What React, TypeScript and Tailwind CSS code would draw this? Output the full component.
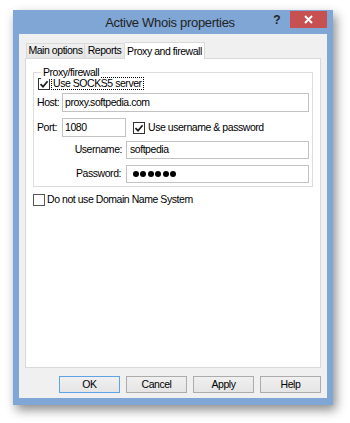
import React from "react";

const Check = ({ checked }: { checked: boolean }) => (
  <span className="w-[12px] h-[12px] border border-[#333] bg-white flex items-center justify-center shrink-0">
    {checked && (
      <svg width="10" height="10" viewBox="0 0 10 10">
        <path d="M1.5 5.2 L4 7.7 L8.6 2.2" fill="none" stroke="#1a1a1a" strokeWidth="1.7" />
      </svg>
    )}
  </span>
);

const Btn = ({ label, def }: { label: string; def?: boolean }) => (
  <div
    className={
      "w-[61px] h-[17px] flex items-center justify-center bg-gradient-to-b from-[#f0f0f0] to-[#e5e5e5] border leading-none text-black " +
      (def ? "border-[#5ea3e6]" : "border-[#acacac]")
    }
  >
    {label}
  </div>
);

export default function App() {
  return (
    <div
      className="w-[350px] h-[423px] bg-white pl-[13px] pt-[10px] text-[10.5px] tracking-[-0.45px] text-black whitespace-nowrap"
      style={{ fontFamily: "'Liberation Sans', Arial, sans-serif" }}
    >
      <div className="w-[320px] h-[395px] bg-[#7fa6d5] flex flex-col shadow-[3px_5px_10px_rgba(0,0,0,0.45)]">
        {/* title bar */}
        <div className="h-[24px] grid grid-cols-[1fr_auto_1fr] items-center pr-[6px]">
          <div />
          <div className="text-[13px] text-[#222] tracking-[-0.3px] pt-[1px]">Active Whois properties</div>
          <div className="flex justify-end self-start h-full">
            <div className="w-[26px] h-[17px] mt-[1px] flex items-center justify-center text-[12px] font-bold text-[#222] tracking-normal">
              ?
            </div>
            <div className="w-[37px] h-[17px] mt-[1px] bg-[#c75050] flex items-center justify-center">
              <svg width="9" height="9" viewBox="0 0 9 9">
                <path d="M1 1 L8 8 M8 1 L1 8" stroke="white" strokeWidth="2" />
              </svg>
            </div>
          </div>
        </div>

        {/* client area */}
        <div className="mx-[6px] h-[364px] bg-[#f0f0f0] flex flex-col px-[6px]">
          {/* tabs */}
          <div className="mt-[8px] h-[16px] flex items-end pl-[1px]">
            <div className="w-[59px] h-[15px] border border-b-0 border-[#d9d9d9] bg-gradient-to-b from-[#f0f0f0] to-[#e5e5e5] flex items-center justify-center">
              Main options
            </div>
            <div className="w-[40px] h-[15px] border border-b-0 border-l-0 border-[#d9d9d9] bg-gradient-to-b from-[#f0f0f0] to-[#e5e5e5] flex items-center justify-center">
              Reports
            </div>
            <div className="relative z-10 w-[80px] h-[17px] -mb-[1px] border border-b-0 border-l-0 border-[#d9d9d9] bg-white flex items-start justify-center pt-[1px]">
              Proxy and firewall
            </div>
          </div>

          {/* panel */}
          <div className="h-[310px] bg-white border border-[#d9d9d9] flex flex-col">
            {/* group box */}
            <div className="relative mt-[13px] ml-[7px] w-[280px] border border-[#dcdcdc] flex flex-col pb-[3px]">
              <span className="absolute -top-[7px] left-[7px] bg-white px-[2px] leading-[13px]">Proxy/firewall</span>

              <div className="mt-[4px] pl-[4px] h-[13px] flex items-center gap-[1px]">
                <Check checked />
                <span className="px-[1px] leading-[11px] border border-dotted border-black">Use SOCKS5 server</span>
              </div>

              <div className="mt-[3px] flex items-center">
                <span className="w-[28px] pl-[3px]">Host:</span>
                <div className="w-[247px] h-[19px] border border-[#c2c2c2] bg-white pl-[2px] flex items-center">
                  proxy.softpedia.com
                </div>
              </div>

              <div className="mt-[6px] flex items-center">
                <span className="w-[28px] pl-[3px]">Port:</span>
                <div className="w-[64px] h-[19px] border border-[#c2c2c2] bg-white pl-[2px] flex items-center">1080</div>
                <div className="ml-[7px] flex items-center gap-[3px]">
                  <Check checked />
                  <span>Use username &amp; password</span>
                </div>
              </div>

              <div className="mt-[4px] flex items-center">
                <span className="w-[92px] pr-[4px] text-right">Username:</span>
                <div className="w-[183px] h-[18px] border border-[#c2c2c2] bg-white pl-[3px] flex items-center">softpedia</div>
              </div>

              <div className="mt-[6px] flex items-center">
                <span className="w-[92px] pr-[5px] text-right">Password:</span>
                <div className="w-[183px] h-[18px] border border-[#c2c2c2] bg-white pl-[6px] flex items-center gap-[1.4px]">
                  <span className="w-[6px] h-[6px] rounded-full bg-black" />
                  <span className="w-[6px] h-[6px] rounded-full bg-black" />
                  <span className="w-[6px] h-[6px] rounded-full bg-black" />
                  <span className="w-[6px] h-[6px] rounded-full bg-black" />
                  <span className="w-[6px] h-[6px] rounded-full bg-black" />
                  <span className="w-[6px] h-[6px] rounded-full bg-black" />
                </div>
              </div>
            </div>

            <div className="mt-[5px] ml-[7px] flex items-center gap-[2px]">
              <span className="w-[12px] h-[12px] border border-[#555] bg-white shrink-0" />
              <span>Do not use Domain Name System</span>
            </div>
          </div>

          {/* buttons */}
          <div className="mt-[8px] flex justify-end gap-[6px]">
            <Btn label="OK" def />
            <Btn label="Cancel" />
            <Btn label="Apply" />
            <Btn label="Help" />
          </div>
        </div>
      </div>
    </div>
  );
}
